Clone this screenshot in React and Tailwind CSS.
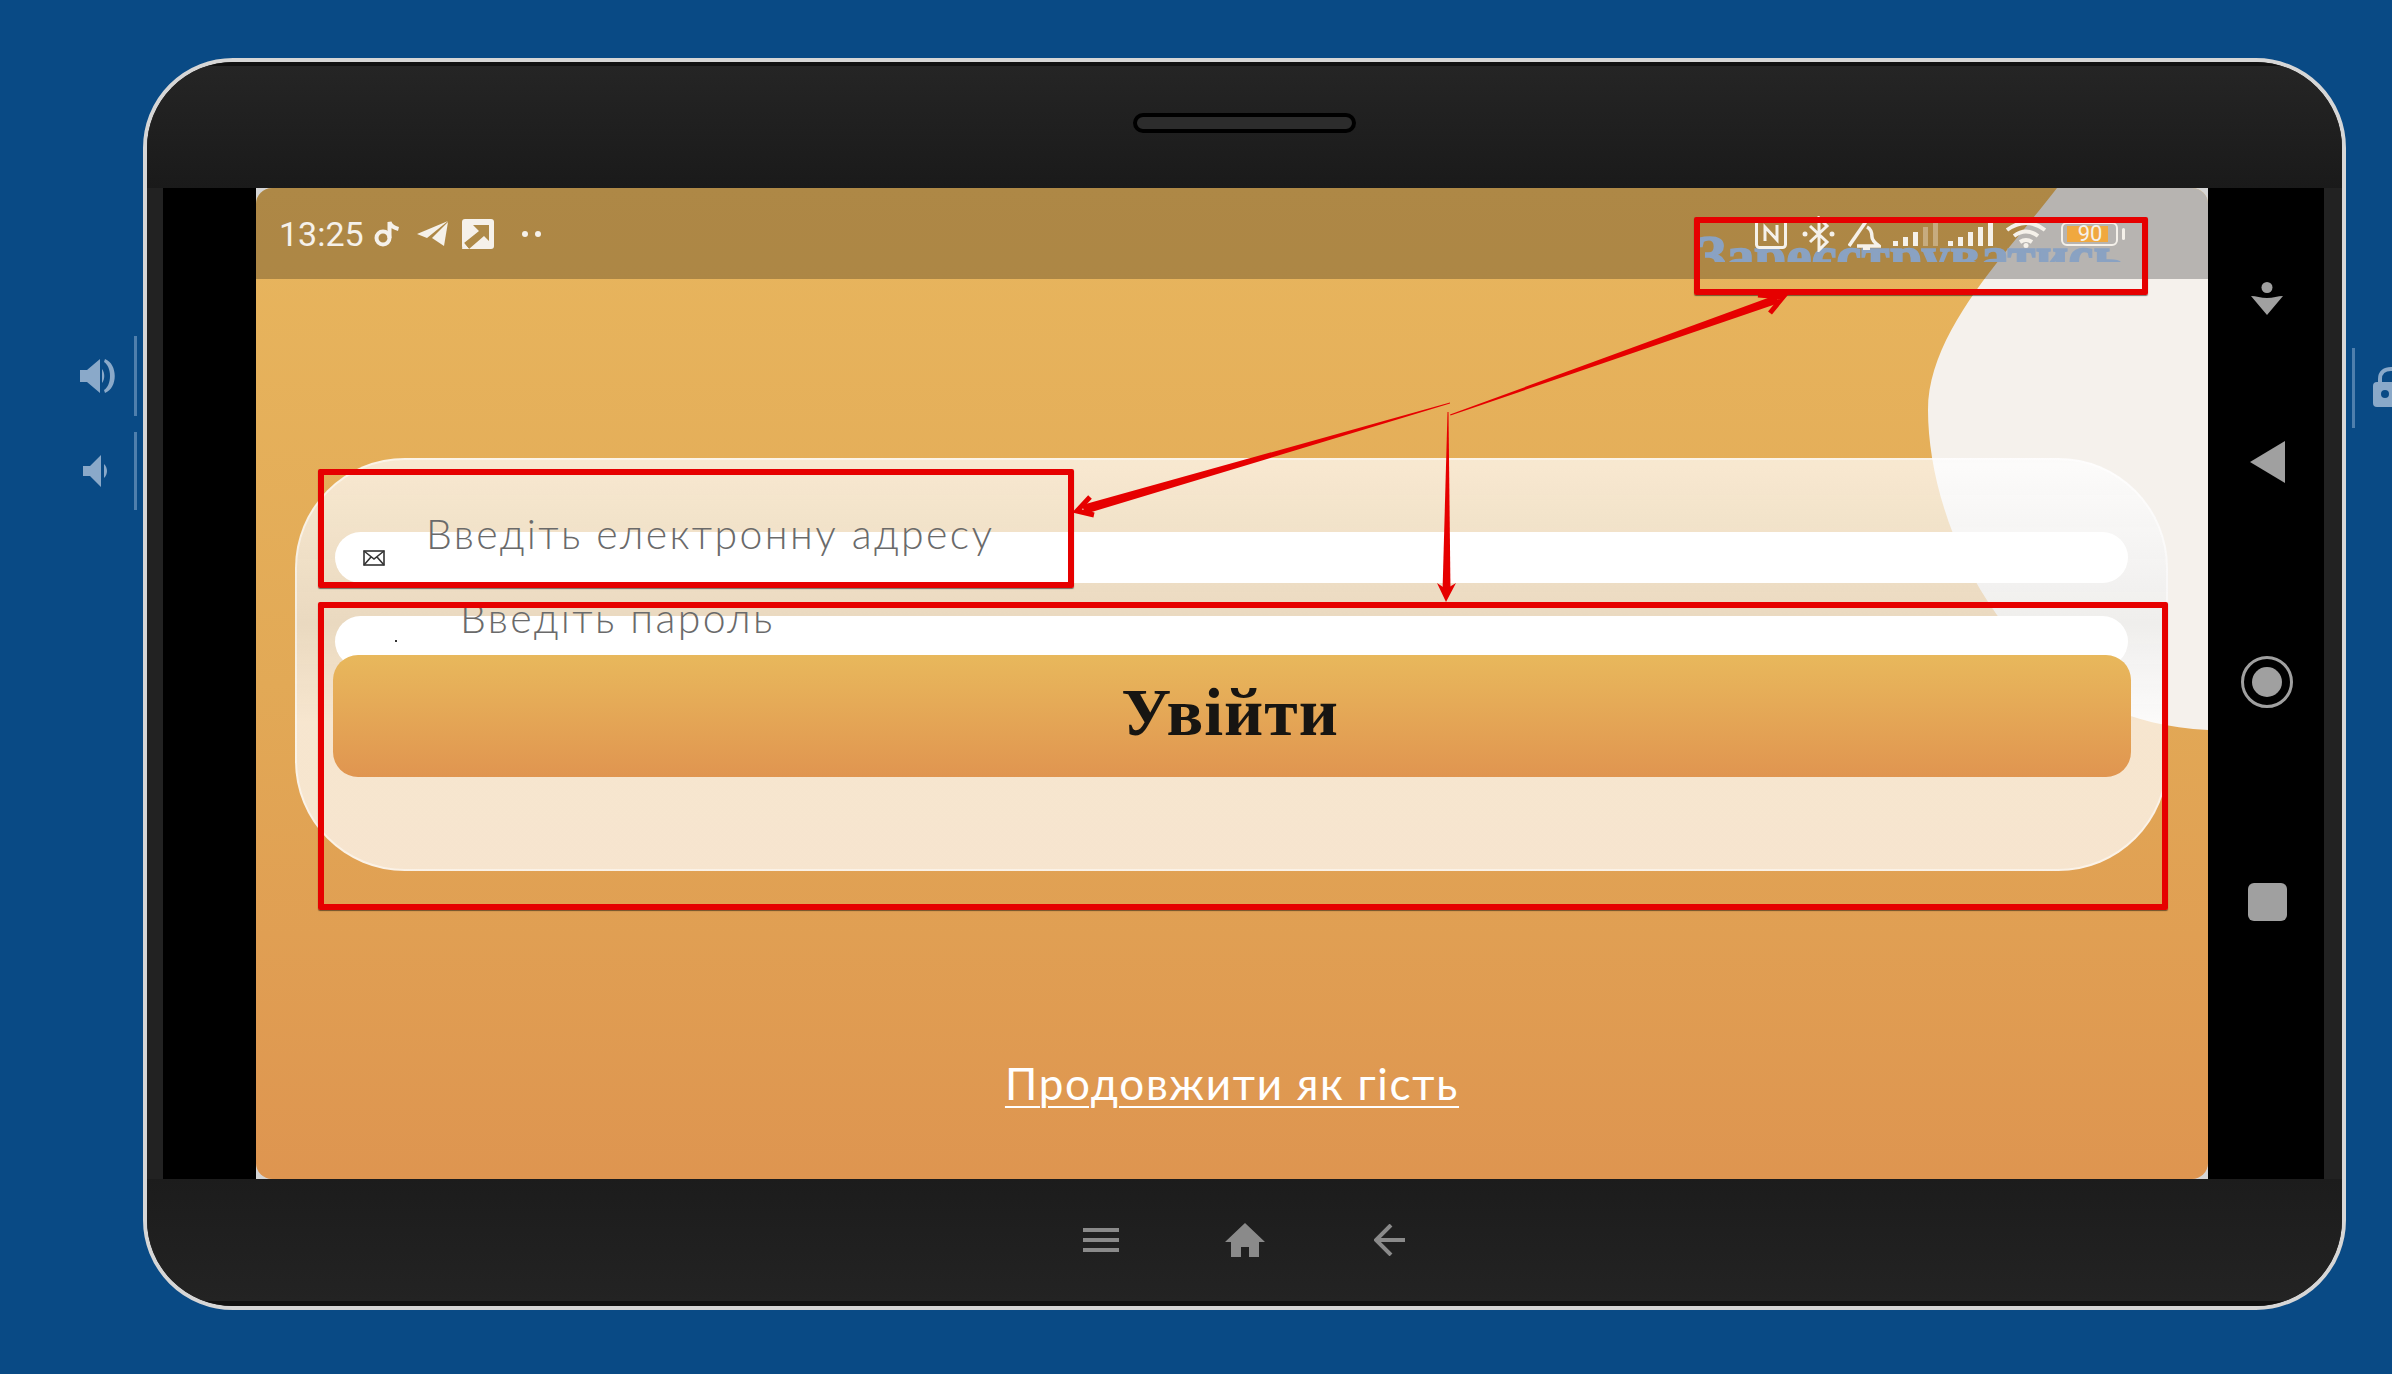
import React from 'react';

function VolumeUp() {
  return (
    <svg width="36" height="36" viewBox="0 0 36 36" fill="#8AA9C9">
      <path d="M0 12h7L20 1v34L7 24H0z" />
      <path d="M22 11c3 4 3 10 0 14z" />
      <path d="M25 1c13 5 13 29 0 34l-1-3c8-5 8-23 0-28z" />
    </svg>
  );
}

function VolumeDown() {
  return (
    <svg width="28" height="32" viewBox="0 0 28 32" fill="#8AA9C9">
      <path d="M0 11h7L18 0v32L7 21H0z" />
      <path d="M21 9c4 4 4 10 0 14z" />
    </svg>
  );
}

function Lock() {
  return (
    <svg width="40" height="40" viewBox="0 0 40 40" fill="none">
      <path d="M7 17v-5C7 5 12 2 18 2s11 3 11 10v5" stroke="#8AA9C9" strokeWidth="4" />
      <rect x="0" y="15" width="40" height="25" rx="4" fill="#8AA9C9" />
      <circle cx="12" cy="27" r="4" fill="#094A85" />
    </svg>
  );
}

function NoteIcon() {
  return (
    <svg width="27" height="27" viewBox="0 0 27 27" fill="none" stroke="#F5F1EA" strokeWidth="4">
      <circle cx="9" cy="18" r="6.5" />
      <path d="M15.5 18V2c1 4 5 6 9 7" />
    </svg>
  );
}

function TelegramIcon() {
  return (
    <svg width="32" height="25" viewBox="0 0 32 25" fill="#F5F1EA">
      <path d="M0 13 31 0 10 17z" />
      <path d="M31 1 27 25 15 17z" />
    </svg>
  );
}

function ShortcutIcon() {
  return (
    <svg width="32" height="30" viewBox="0 0 32 30">
      <rect width="32" height="30" rx="3" fill="#F5F1EA" />
      <path d="M11 6h16v16l-5-5L7 30 2 24l15-12z" fill="#AE8A48" />
      <path d="M0 30 2 24l5 6z" fill="#F5F1EA" />
    </svg>
  );
}

function NfcIcon() {
  return (
    <svg width="32" height="30" viewBox="0 0 32 30" fill="none" stroke="#F5F1EA" strokeWidth="3">
      <rect x="1.5" y="1.5" width="29" height="27" rx="3" />
      <path d="M10 22V8l12 13V6" />
    </svg>
  );
}

function BluetoothIcon() {
  return (
    <svg width="33" height="36" viewBox="0 0 33 36" fill="none" stroke="#F5F1EA" strokeWidth="3">
      <path d="M8 10 25 26 17 34V2l8 8L8 26" />
      <circle cx="3" cy="18" r="2.5" fill="#F5F1EA" stroke="none" />
      <circle cx="30" cy="18" r="2.5" fill="#F5F1EA" stroke="none" />
    </svg>
  );
}

function BellOffIcon() {
  return (
    <svg width="33" height="32" viewBox="0 0 33 32" fill="none" stroke="#F5F1EA" strokeWidth="3.5">
      <path d="M1 28 19 2" />
      <path d="M19 9c4 2 5 6 5 10 0 3 3 6 7 9H9" />
      <path d="M15 30h7" strokeWidth="4" />
    </svg>
  );
}

function SignalIcon({ dim }) {
  const bars = [5, 9, 14, 19, 25];
  return (
    <svg width="45" height="25" viewBox="0 0 45 25" fill="#F5F1EA">
      {bars.map((h, i) => (
        <rect key={i} x={i * 10} y={25 - h} width="5" height={h} opacity={dim && i > 2 ? 0.35 : 1} />
      ))}
    </svg>
  );
}

function WifiIcon() {
  return (
    <svg width="43" height="28" viewBox="0 0 43 28" fill="none" stroke="#F5F1EA" strokeWidth="4">
      <path d="M2 10Q21-4 40 10" />
      <path d="M9 16q12-9 24 0" />
      <path d="M15 22q6-4 12 0" />
      <circle cx="21" cy="25.5" r="2.5" fill="#F5F1EA" stroke="none" />
    </svg>
  );
}

function PersonDown() {
  return (
    <svg width="32" height="33" viewBox="0 0 32 33" fill="#A0A0A0">
      <circle cx="16" cy="5.5" r="5.5" />
      <path d="M0 14c5 0 10 2 16 2s11-2 16-2L16 33z" />
    </svg>
  );
}

function HomeIcon() {
  return (
    <svg width="40" height="34" viewBox="0 0 40 34" fill="#8A8A8A">
      <path d="M20 0 40 19h-6v15H24V24h-8v10H6V19H0z" />
    </svg>
  );
}

function ArrowLeftIcon() {
  return (
    <svg width="31" height="32" viewBox="0 0 31 32" fill="none" stroke="#8A8A8A" strokeWidth="4">
      <path d="M31 16H2" />
      <path d="M17 1 2 16l15 15" />
    </svg>
  );
}

function MailIcon() {
  return (
    <svg width="22" height="16" viewBox="0 0 22 16" fill="none" stroke="#333" strokeWidth="1.6">
      <rect x="1" y="1" width="20" height="14" />
      <path d="M1 1l10 8 10-8M1 15l7-8M21 15l-7-8" />
    </svg>
  );
}

export default function App() {
  return (
    <div className="relative flex h-[1374px] w-[2392px] overflow-hidden bg-[#094A85] pt-[58px]">
      {/* Left side buttons */}
      <div className="flex w-[143px] shrink-0 flex-col gap-[16px] pt-[278px] pr-[6px]">
        <div className="flex h-[80px] items-center justify-end gap-[18px]">
          <VolumeUp />
          <div className="h-full w-[3px] bg-[#4F7FAD]"></div>
        </div>
        <div className="flex h-[78px] items-center justify-end gap-[23px]">
          <VolumeDown />
          <div className="h-full w-[3px] bg-[#4F7FAD]"></div>
        </div>
      </div>

      {/* Device */}
      <div className="flex h-[1252px] w-[2203px] shrink-0 flex-col overflow-hidden rounded-[90px] border-[4px] border-[#D6D6D6] bg-[#222222]">
        <div className="flex h-[126px] items-start justify-center border-t-[4px] border-[#111111] bg-gradient-to-b from-[#252525] to-[#1A1A1A] pt-[47px]">
          <div className="h-[20px] w-[223px] rounded-full border-[4px] border-black bg-[#2C2C2C]"></div>
        </div>

        <div className="mx-[16px] flex h-[991px] w-[2161px] bg-black">
          <div className="w-[93px] shrink-0"></div>

          {/* App screen */}
          <div className="w-[1952px] shrink-0 bg-[#D5D5D5]">
            <div className="relative h-full overflow-hidden rounded-[16px] bg-gradient-to-b from-[#E8B65E] via-[#E2A956] to-[#DE9550]">
              <svg className="absolute inset-0" width="1952" height="991" viewBox="256 188 1952 991">
                <path
                  d="M2057 188C2010 250 1928 330 1928 410c0 60 22 140 69 205C2035 668 2100 725 2208 730V188z"
                  fill="#F5F1EC"
                />
              </svg>

              {/* Status bar */}
              <div className="relative flex h-[91px] items-center justify-between bg-black/25 pr-[83px] pl-[23px] font-['Roboto',sans-serif] text-[#F5F1EA]">
                <div className="absolute top-[34px] left-[1440px] h-[40px] overflow-hidden pt-[9px]">
                  <p className="font-['Liberation_Serif',serif] text-[57px] leading-[50px] font-bold whitespace-nowrap text-[#8AA2C2] [-webkit-text-stroke:1.5px_#8AA2C2]">
                    Зареєструватись
                  </p>
                </div>
                <div className="relative flex items-center">
                  <span className="text-[34px] leading-none">13:25</span>
                  <span className="ml-[10px]"><NoteIcon /></span>
                  <span className="ml-[16px]"><TelegramIcon /></span>
                  <span className="ml-[13px]"><ShortcutIcon /></span>
                  <div className="ml-[28px] flex gap-[7px]">
                    <div className="h-[6px] w-[6px] rounded-full bg-[#F5F1EA]"></div>
                    <div className="h-[6px] w-[6px] rounded-full bg-[#F5F1EA]"></div>
                  </div>
                </div>
                <div className="relative flex items-center">
                  <NfcIcon />
                  <span className="ml-[15px]"><BluetoothIcon /></span>
                  <span className="ml-[13px]"><BellOffIcon /></span>
                  <span className="ml-[12px]"><SignalIcon dim /></span>
                  <span className="ml-[10px]"><SignalIcon /></span>
                  <span className="ml-[12px]"><WifiIcon /></span>
                  <div className="ml-[13px] flex items-center">
                    <div className="flex h-[24px] w-[57px] items-center rounded-[6px] border-[2px] border-[#F5F1EA] pl-[4px]">
                      <div className="flex h-[16px] w-[41px] items-center justify-center bg-[#F0A83F] pl-[5px] text-[22px] leading-none text-[#F5F1EA]">
                        90
                      </div>
                    </div>
                    <div className="ml-[4px] h-[12px] w-[3px] rounded-full bg-[#F5F1EA]"></div>
                  </div>
                </div>
              </div>

              {/* Login card */}
              <div className="relative mt-[179px] ml-[39px] h-[413px] w-[1873px] rounded-[110px] border-[2px] border-white/50 bg-gradient-to-b from-white/72 via-[#EDEDED]/70 via-40% to-white/72 to-65% px-[36px] pt-[72px]">
                <div className="relative mx-[2px] flex h-[51px] items-center rounded-full bg-white pl-[28px]">
                  <MailIcon />
                  <span className="absolute top-[-26px] left-[91px] font-['Lato',sans-serif] text-[41px] leading-[56px] font-light tracking-[2.4px] whitespace-nowrap text-[#6A6A6A]">
                    Введіть електронну адресу
                  </span>
                </div>
                <div className="relative mx-[2px] mt-[33px] flex h-[51px] items-center rounded-full bg-white pl-[60px]">
                  <div className="mt-[-2px] h-[2px] w-[2px] bg-[#333333]"></div>
                  <span className="absolute top-[-26px] left-[125px] font-['Lato',sans-serif] text-[41px] leading-[56px] font-light tracking-[2.4px] whitespace-nowrap text-[#6A6A6A]">
                    Введіть пароль
                  </span>
                </div>
                <button className="relative mt-[-12px] flex h-[122px] w-[1798px] items-center justify-center rounded-[25px] bg-gradient-to-b from-[#E8B85C] to-[#E09550] pr-[4px] pb-[8px]">
                  <span className="font-['Liberation_Serif',serif] text-[68px] leading-none font-bold tracking-[1px] text-[#171512]">
                    Увійти
                  </span>
                </button>
              </div>

              {/* Guest link */}
              <p className="relative mt-[187px] text-center font-['Lato',sans-serif] text-[44px] leading-[50px] tracking-[1.7px] text-white underline decoration-[2px] underline-offset-[6px]">
                Продовжити як гість
              </p>
            </div>
          </div>

          {/* Android nav column */}
          <div className="flex w-[116px] shrink-0 flex-col items-center pt-[94px] pl-[2px]">
            <PersonDown />
            <div className="mt-[126px] h-0 w-0 border-y-[21.5px] border-r-[35px] border-y-transparent border-r-[#A0A0A0]"></div>
            <div className="mt-[173px] flex h-[52px] w-[52px] items-center justify-center rounded-full border-[3px] border-[#A0A0A0]">
              <div className="h-[30px] w-[30px] rounded-full bg-[#A0A0A0]"></div>
            </div>
            <div className="mt-[175px] h-[38px] w-[39px] rounded-[6px] bg-[#A0A0A0]"></div>
          </div>
        </div>

        <div className="flex h-[127px] items-center justify-center border-b-[5px] border-[#111111] bg-gradient-to-b from-[#1C1C1C] to-[#232323] pr-[2px]">
          <div className="flex w-[36px] flex-col gap-[6px]">
            <div className="h-[4px] bg-[#8A8A8A]"></div>
            <div className="h-[4px] bg-[#8A8A8A]"></div>
            <div className="h-[4px] bg-[#8A8A8A]"></div>
          </div>
          <div className="mr-[109px] ml-[106px]"><HomeIcon /></div>
          <ArrowLeftIcon />
        </div>
      </div>

      {/* Right side button */}
      <div className="flex flex-1 items-start gap-[18px] pt-[290px] pl-[6px]">
        <div className="h-[80px] w-[3px] shrink-0 bg-[#4F7FAD]"></div>
        <div className="shrink-0 pt-[19px]"><Lock /></div>
      </div>

      {/* Red annotation boxes and arrows */}
      <div className="absolute top-[217px] left-[1694px] h-[78px] w-[454px] rounded-[2px] border-[6px] border-[#E60000] shadow-[0_1px_1px_rgba(0,0,0,0.5)]"></div>
      <div className="absolute top-[469px] left-[318px] h-[119px] w-[756px] rounded-[2px] border-[6px] border-[#E60000] shadow-[0_1px_1px_rgba(0,0,0,0.5)]"></div>
      <div className="absolute top-[602px] left-[318px] h-[308px] w-[1850px] rounded-[2px] border-[6px] border-[#E60000] shadow-[0_1px_1px_rgba(0,0,0,0.5)]"></div>
      <svg className="absolute inset-0" width="2392" height="1374" viewBox="0 0 2392 1374" fill="#E60000">
        <path d="M1450 402.5v1L1085 514l-3-9z" />
        <path d="M1090 497l-13 14 17 4" fill="none" stroke="#E60000" strokeWidth="5" />
        <path d="M1450 414.5l.5 1L1779 303l-3-8z" />
        <path d="M1758 295l25 2-13 16" fill="none" stroke="#E60000" strokeWidth="5" />
        <path d="M1447.5 412h1l2 180h-8z" />
        <path d="M1437 583l9 19 10-19-10 6z" />
      </svg>
    </div>
  );
}
